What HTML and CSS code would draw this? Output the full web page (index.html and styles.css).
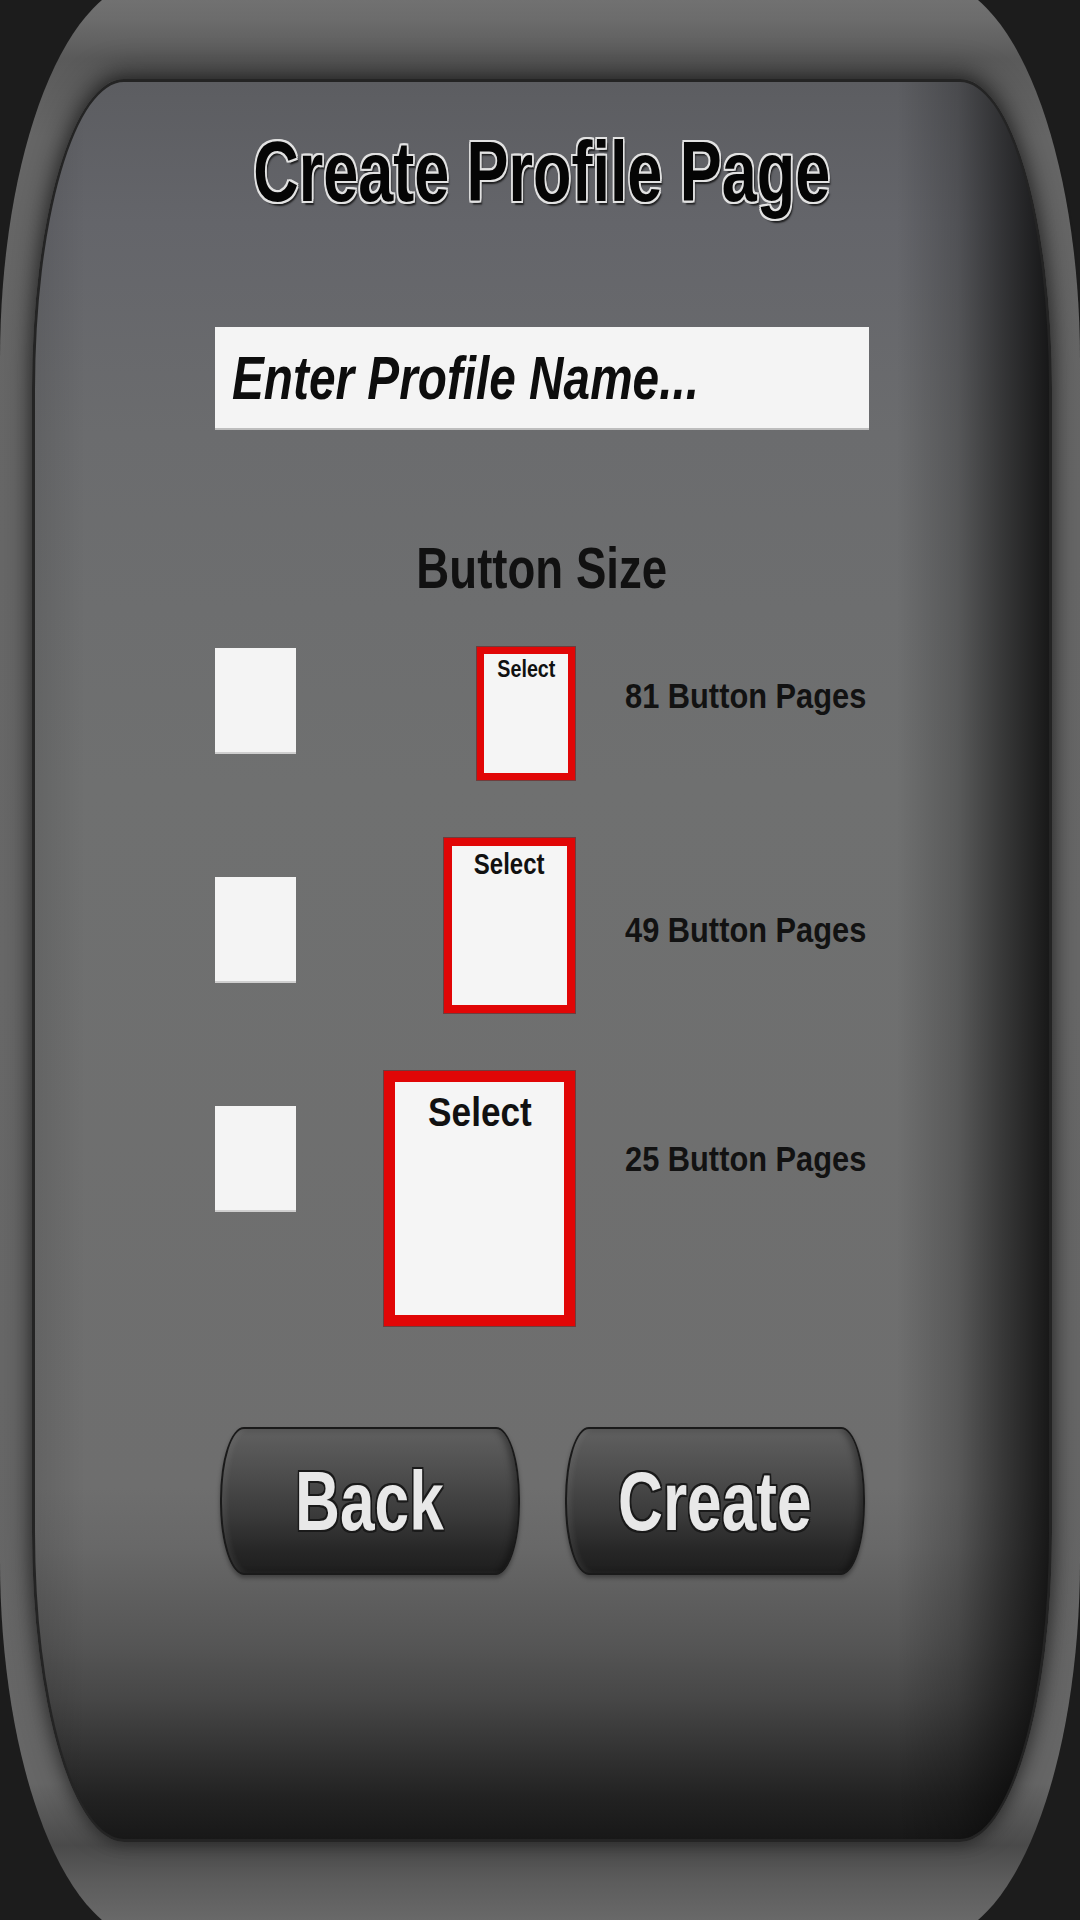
FILE: index.html
```html
<!DOCTYPE html>
<html lang="en">
<head>
<meta charset="utf-8">
<title>Create Profile Page</title>
<link rel="stylesheet" href="styles.css">
</head>
<body>
<div class="bezel">
  <main class="panel">
    <h1 class="title"><span>Create Profile Page</span></h1>
    <div class="name-field"><span class="placeholder">Enter Profile Name...</span></div>
    <h2 class="section-title"><span>Button Size</span></h2>
    <div class="size-list">
      <div class="size-row row-81">
        <div class="thumb"></div>
        <div class="select-col">
          <div class="select-box"><span>Select</span></div>
        </div>
        <div class="size-label"><span>81 Button Pages</span></div>
      </div>
      <div class="size-row row-49">
        <div class="thumb"></div>
        <div class="select-col">
          <div class="select-box"><span>Select</span></div>
        </div>
        <div class="size-label"><span>49 Button Pages</span></div>
      </div>
      <div class="size-row row-25">
        <div class="thumb"></div>
        <div class="select-col">
          <div class="select-box"><span>Select</span></div>
        </div>
        <div class="size-label"><span>25 Button Pages</span></div>
      </div>
    </div>
    <div class="actions">
      <button class="btn"><span>Back</span></button>
      <button class="btn"><span>Create</span></button>
    </div>
  </main>
</div>
</body>
</html>
```
FILE: styles.css
```css
html, body {
  margin: 0;
  padding: 0;
}
body {
  width: 1080px;
  height: 1920px;
  overflow: hidden;
  background: #1c1c1c;
  font-family: "Liberation Sans", Arial, sans-serif;
}

.bezel {
  box-sizing: border-box;
  width: 1080px;
  height: 1960px;
  margin-top: -20px;
  padding: 99px 28px 0 32px;
  border-radius: 150px / 380px;
  background: linear-gradient(to bottom, #767676 0%, #6c6c6c 2%, #5a5a5a 4%, #666 8%, #686868 50%, #666 92%, #4a4a4a 95.2%, #5c5c5c 97%, #6c6c6c 99.5%);
}

.panel {
  box-sizing: border-box;
  height: 1763px;
  border: 3px solid #242424;
  border-radius: 92px / 310px;
  background:
    linear-gradient(to right, rgba(0,0,0,.1) 0%, rgba(0,0,0,0) 5%, rgba(0,0,0,0) 85%, rgba(0,0,0,.2) 91%, rgba(0,0,0,.47) 95%, rgba(0,0,0,.78) 100%),
    linear-gradient(to bottom, #5c5d61 0%, #64656a 8%, #6b6c6e 20%, #6f7070 40%, #6e6e6e 80%, #686868 83.4%, #5f5f5f 86%, #555 89%, #474747 92%, #333 95%, #222 97.6%, #181818 100%);
  box-shadow: 0 -8px 30px rgba(0,0,0,.45), 0 0 14px 3px rgba(0,0,0,.3);
}

.title {
  margin: 47px 0 0;
  font-size: 85px;
  line-height: 85px;
  font-weight: bold;
  text-align: center;
  color: #050505;
}
.title span {
  display: inline-block;
  transform: scaleX(0.74);
  text-shadow:
    -2px -2px 0 #e2e2e2, 2px -2px 0 #e2e2e2, -2px 2px 0 #e2e2e2, 2px 2px 0 #e2e2e2,
    0 -2px 0 #e2e2e2, 0 2px 0 #e2e2e2, -2px 0 0 #e2e2e2, 2px 0 0 #e2e2e2,
    3px 4px 2px rgba(0,0,0,.7);
}

.name-field {
  box-sizing: border-box;
  width: 654px;
  height: 101px;
  margin: 113px auto 0;
  padding-left: 17px;
  background: #f4f4f4;
  box-shadow: 0 2px 0 #bdbdbd;
  font-size: 62px;
  line-height: 101px;
  font-weight: bold;
  font-style: italic;
  color: #0d0d0d;
  white-space: nowrap;
}
.placeholder {
  display: inline-block;
  transform: scaleX(0.77);
  transform-origin: left center;
}

.section-title {
  margin: 112px 0 0;
  font-size: 57px;
  line-height: 57px;
  font-weight: bold;
  text-align: center;
  color: #111;
}
.section-title span {
  display: inline-block;
  transform: scaleX(0.8);
}

.size-list {
  margin-top: 50px;
  display: flex;
  flex-direction: column;
  gap: 58px;
}
.size-row {
  display: flex;
  align-items: flex-start;
  padding-left: 180px;
}
.row-81 { --offset: 1px; --label-shift: -5px; }
.row-49 { --offset: 39px; --label-shift: 0px; }
.row-25 { --offset: 35px; --label-shift: 0px; }

.thumb {
  box-sizing: border-box;
  width: 81px;
  height: 106px;
  margin-top: var(--offset);
  background: #f4f4f4;
  border-bottom: 2px solid #cfcfcf;
}
.select-col {
  width: 279px;
  display: flex;
  justify-content: flex-end;
}
.select-box {
  box-sizing: border-box;
  background: #f5f5f5;
  border: 7px solid #e10606;
  box-shadow: 0 0 0 1px rgba(110,0,0,.45);
  text-align: center;
  font-weight: bold;
  color: #111;
  white-space: nowrap;
}
.select-box span {
  display: inline-block;
}
.row-81 .select-box {
  width: 98px;
  height: 133px;
  border-width: 7px;
  padding-top: 3px;
  font-size: 24px;
  line-height: 24px;
}
.row-81 .select-box span { transform: scaleX(0.82); }
.row-49 .select-box {
  width: 131px;
  height: 175px;
  border-width: 8px;
  padding-top: 3px;
  font-size: 30px;
  line-height: 30px;
}
.row-49 .select-box span { transform: scaleX(0.8); }
.row-25 .select-box {
  width: 191px;
  height: 255px;
  border-width: 11px;
  padding-top: 10px;
  font-size: 40px;
  line-height: 40px;
}
.row-25 .select-box span { transform: scaleX(0.88); }

.size-label {
  margin-left: 50px;
  margin-top: calc(var(--offset) + var(--label-shift));
  height: 106px;
  line-height: 106px;
  font-size: 35px;
  font-weight: bold;
  color: #121212;
  white-space: nowrap;
}
.size-label span {
  display: inline-block;
  transform: scaleX(0.88);
  transform-origin: left center;
}

.actions {
  margin-top: 101px;
  display: flex;
  justify-content: center;
  gap: 45px;
}
.btn {
  box-sizing: border-box;
  width: 300px;
  height: 148px;
  padding: 0;
  border: 2px solid #1a1a1a;
  border-radius: 24px / 72px;
  background: linear-gradient(to bottom, #606060 0%, #4e4e4e 30%, #3a3a3a 60%, #262626 85%, #1e1e1e 100%);
  box-shadow: inset 4px 0 5px rgba(255,255,255,.07), inset -4px 0 6px rgba(0,0,0,.35), 0 3px 4px rgba(0,0,0,.35);
  display: flex;
  align-items: center;
  justify-content: center;
  font-family: "Liberation Sans", Arial, sans-serif;
  font-size: 84px;
  line-height: 84px;
  font-weight: bold;
  color: #e8e8e8;
}
.btn span {
  display: inline-block;
  transform: scaleX(0.74);
  text-shadow:
    -2px -2px 0 #1a1a1a, 2px -2px 0 #1a1a1a, -2px 2px 0 #1a1a1a, 2px 2px 0 #1a1a1a,
    0 -2px 0 #1a1a1a, 0 2px 0 #1a1a1a, -2px 0 0 #1a1a1a, 2px 0 0 #1a1a1a;
}
```
